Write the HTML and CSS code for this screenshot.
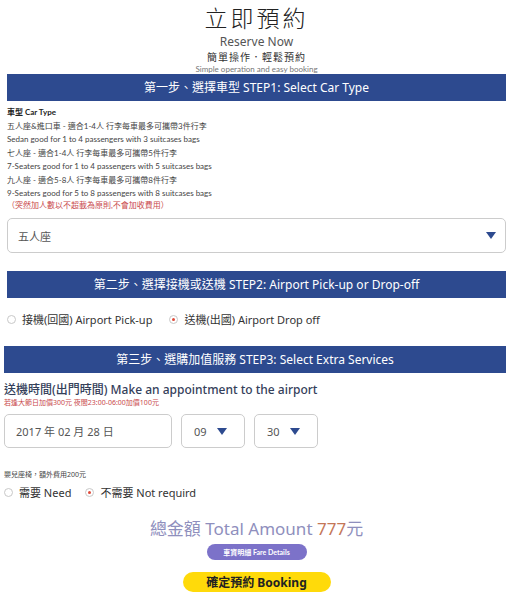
FILE: index.html
```html
<!DOCTYPE html>
<html lang="zh-Hant">
<head>
    <meta charset="UTF-8">
    <meta name="viewport" content="width=device-width, initial-scale=1.0">
    <title>立即預約 - Reserve Now</title>
    <link rel="stylesheet" href="styles.css">
</head>
<body>
    <div class="page">
        <div class="header">
            <h1>立即預約</h1>
            <p class="sub-en">Reserve Now</p>
            <p class="sub-zh">簡單操作．輕鬆預約</p>
            <p class="sub-small">Simple operation and easy booking</p>
        </div>

        <div class="step-bar step-one">第一步、選擇車型 STEP1: Select Car Type</div>
        <div class="car-info">
            <p class="car-title">車型 Car Type</p>
            <div class="car-item">
                <p>五人座&amp;進口車 - 適合1-4人 行李每車最多可攜帶3件行李</p>
                <p>Sedan good for 1 to 4 passengers with 3 suitcases bags</p>
            </div>
            <div class="car-item">
                <p>七人座 - 適合1-4人 行李每車最多可攜帶5件行李</p>
                <p>7-Seaters good for 1 to 4 passengers with 5 suitcases bags</p>
            </div>
            <div class="car-item">
                <p>九人座 - 適合5-8人 行李每車最多可攜帶8件行李</p>
                <p>9-Seaters good for 5 to 8 passengers with 8 suitcases bags</p>
                <p class="note">（突然加人數以不超載為原則,不會加收費用）</p>
            </div>
        </div>
        <div class="select-box car-select">
            <span>五人座</span>
            <span class="arrow"></span>
        </div>

        <div class="step-bar step-two">第二步、選擇接機或送機 STEP2: Airport Pick-up or Drop-off</div>
        <div class="radio-row">
            <label class="radio"><span class="dot"></span>接機(回國) Airport Pick-up</label>
            <label class="radio"><span class="dot checked"></span>送機(出國) Airport Drop off</label>
        </div>

        <div class="step-bar step-three">第三步、選購加值服務 STEP3: Select Extra Services</div>
        <h3 class="time-title">送機時間(出門時間) Make an appointment to the airport</h3>
        <p class="time-note">若逢大節日加價300元 夜間23:00-06:00加價100元</p>
        <div class="time-row">
            <div class="select-box date-box"><span>2017 年 02 月 28 日</span></div>
            <div class="select-box small-box"><span>09</span><span class="arrow"></span></div>
            <div class="select-box small-box"><span>30</span><span class="arrow"></span></div>
        </div>

        <p class="seat-note">嬰兒座椅，額外費用200元</p>
        <div class="radio-row seat-row">
            <label class="radio"><span class="dot"></span>需要 Need</label>
            <label class="radio"><span class="dot checked"></span>不需要 Not requird</label>
        </div>

        <div class="summary">
            <p class="total">總金額 Total Amount <span class="price">777</span>元</p>
            <button class="fare-btn">車資明細 Fare Details</button>
            <button class="book-btn">確定預約 Booking</button>
        </div>
    </div>
</body>
</html>
```

FILE: styles.css
```css
* {
    margin: 0;
    padding: 0;
    box-sizing: border-box;
}

body {
    background: #fff;
    color: #444;
    font-family: "Noto Sans", "Noto Sans CJK TC", sans-serif;
}

.page {
    width: 509px;
    padding: 0 3px 0 7px;
}

/* header */
.header {
    text-align: center;
}

.header h1 {
    font-family: "Noto Sans CJK TC", sans-serif;
    font-weight: 300;
    font-size: 23px;
    line-height: 34px;
    color: #222;
    letter-spacing: 3px;
}

.sub-en {
    font-size: 12px;
    line-height: 16px;
    color: #555;
}

.sub-zh {
    font-family: "Noto Sans CJK TC", sans-serif;
    font-size: 10px;
    line-height: 14px;
    color: #333;
    letter-spacing: 1px;
}

.sub-small {
    font-family: Lato, sans-serif;
    font-size: 8px;
    line-height: 10px;
    color: #777;
}

/* step bars */
.step-bar {
    background: #2d4a8f;
    color: #fff;
    text-align: center;
    font-size: 12px;
    height: 27px;
    line-height: 27px;
}

.step-two {
    margin-top: 18px;
}

.step-three {
    margin-left: -3px;
}

/* car types */
.car-info {
    font-family: Lato, "Noto Sans CJK TC", sans-serif;
    font-size: 8px;
    line-height: 13px;
    color: #444;
    padding-top: 4px;
}

.car-title {
    font-weight: bold;
    color: #222;
    line-height: 15px;
}

.car-item {
    margin-bottom: 1px;
}

.note {
    color: #c9494b;
    line-height: 10px;
}

/* selects */
.select-box {
    border: 1px solid #ccc;
    border-radius: 5px;
    display: flex;
    align-items: center;
    justify-content: space-between;
    font-size: 11px;
    color: #555;
    background: #fff;
}

.car-select {
    height: 35px;
    margin-top: 8px;
    padding: 0 9px 0 10px;
    font-family: "Noto Sans CJK TC", sans-serif;
}

.arrow {
    width: 0;
    height: 0;
    border-left: 5px solid transparent;
    border-right: 5px solid transparent;
    border-top: 7px solid #2d4a8f;
}

/* radios */
.radio-row {
    display: flex;
    gap: 17px;
    padding: 14px 0 0 0;
    height: 48px;
    font-size: 11px;
    color: #333;
}

.radio {
    display: flex;
    align-items: center;
    gap: 6px;
    height: 14px;
}

.dot {
    width: 9px;
    height: 9px;
    border: 1px solid #c8c8c8;
    border-radius: 50%;
    position: relative;
}

.dot.checked::after {
    content: "";
    position: absolute;
    top: 2px;
    left: 2px;
    width: 3px;
    height: 3px;
    border-radius: 50%;
    background: #e04a3a;
}

/* time */
.time-title {
    font-size: 12px;
    font-weight: 500;
    color: #34405a;
    margin-top: 9px;
    line-height: 16px;
    margin-left: -3px;
}

.time-note {
    font-size: 7px;
    color: #c9494b;
    line-height: 10px;
    margin-left: -3px;
}

.time-row {
    display: flex;
    gap: 9px;
    margin-top: 6px;
    margin-left: -3px;
}

.time-row .select-box {
    height: 34px;
}

.date-box {
    width: 168px;
    padding-left: 11px;
}

.small-box {
    width: 64px;
    padding: 0 17px 0 12px;
}

.seat-note {
    font-size: 7px;
    color: #444;
    margin-top: 21px;
    margin-left: -3px;
}

.seat-row {
    padding-top: 6px;
    margin-left: -3px;
    gap: 14px;
}

/* summary */
.summary {
    display: flex;
    flex-direction: column;
    align-items: center;
    margin-top: -9px;
}

.total {
    font-size: 17px;
    color: #8f8fbd;
    line-height: 22px;
}

.price {
    color: #c47758;
}

.fare-btn {
    margin-top: 4px;
    width: 100px;
    height: 16px;
    border: none;
    border-radius: 8px;
    background: #7c72c9;
    color: #fff;
    font-family: Lato, "Noto Sans CJK TC", sans-serif;
    font-size: 7px;
    font-weight: bold;
}

.book-btn {
    margin-top: 12px;
    width: 148px;
    height: 20px;
    border: none;
    border-radius: 10px;
    background: #ffda0a;
    color: #222;
    font-family: "Noto Sans", "Noto Sans CJK TC", sans-serif;
    font-size: 12px;
    font-weight: bold;
}
```
